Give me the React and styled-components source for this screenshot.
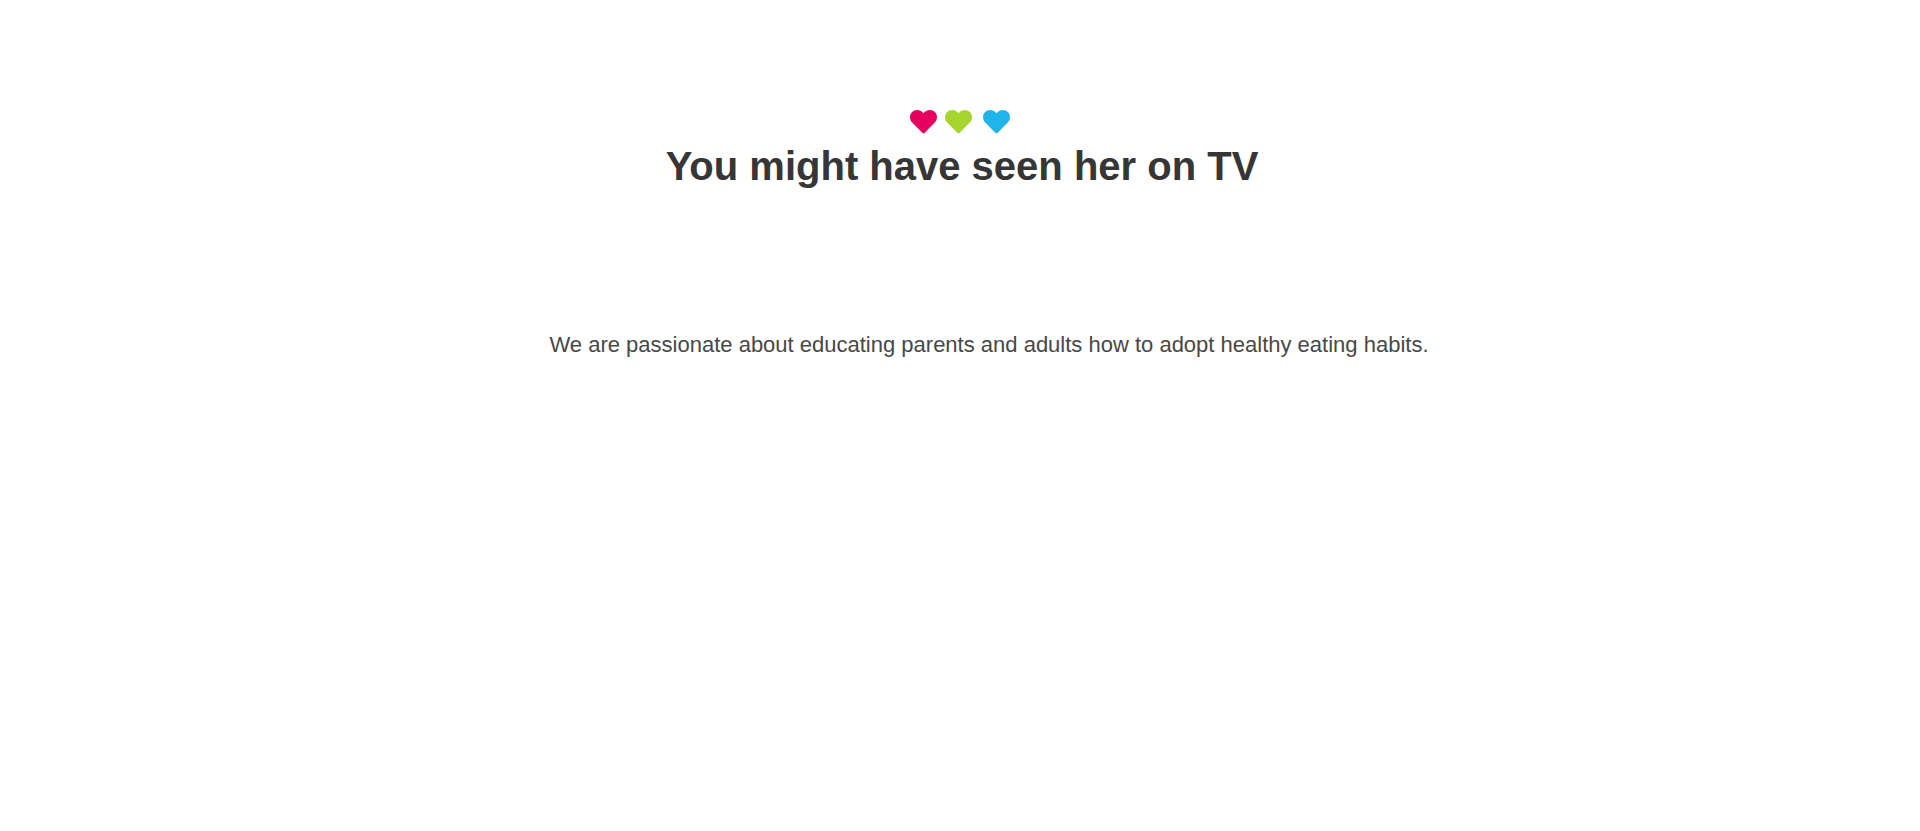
import React from "react";
import styled, { createGlobalStyle } from "styled-components";

const GlobalStyle = createGlobalStyle`
  *, *::before, *::after { box-sizing: border-box; }
  body {
    margin: 0;
    background: #fff;
    font-family: "Liberation Sans", Arial, Helvetica, sans-serif;
  }
`;

const Section = styled.section`
  display: flex;
  flex-direction: column;
  align-items: center;
  min-height: 100vh;
  padding-top: 110px;
`;

const Hearts = styled.svg`
  display: block;
  width: 100px;
  height: 24px;
`;

const Title = styled.h2`
  margin: 8px 0 0;
  padding-left: 4px;
  color: #363636;
  font-size: 40px;
  font-weight: 700;
  line-height: 48px;
  text-align: center;
`;

const Lead = styled.p`
  margin: 138px 0 0;
  padding-left: 58px;
  color: #484848;
  font-size: 22px;
  line-height: 34px;
  text-align: center;
`;

const HEART_PATH =
  "M12.5 22.900 2 12.300C-.6 9.400-.6 5 1.900 2.300 4.800-.7 9.500-.7 12.300 2L13.500 3.200 14.700 2C17.500-.7 22.200-.7 25.100 2.300c2.500 2.700 2.500 7.100-.1 10L14.500 22.900c-.6.6-1.400.6-2 0Z";

const HEARTS = [
  { x: 0, color: "#e60060" },
  { x: 35, color: "#a6d52d" },
  { x: 73, color: "#21b4ea" },
];

export default function App() {
  return (
    <>
      <GlobalStyle />
      <Section>
        <Hearts viewBox="0 0 100 24" aria-hidden="true">
          {HEARTS.map(({ x, color }) => (
            <path
              key={color}
              d={HEART_PATH}
              fill={color}
              transform={`translate(${x} 0)`}
            />
          ))}
        </Hearts>
        <Title>You might have seen her on TV</Title>
        <Lead>
          We are passionate about educating parents and adults how to adopt
          healthy eating habits.
        </Lead>
      </Section>
    </>
  );
}
